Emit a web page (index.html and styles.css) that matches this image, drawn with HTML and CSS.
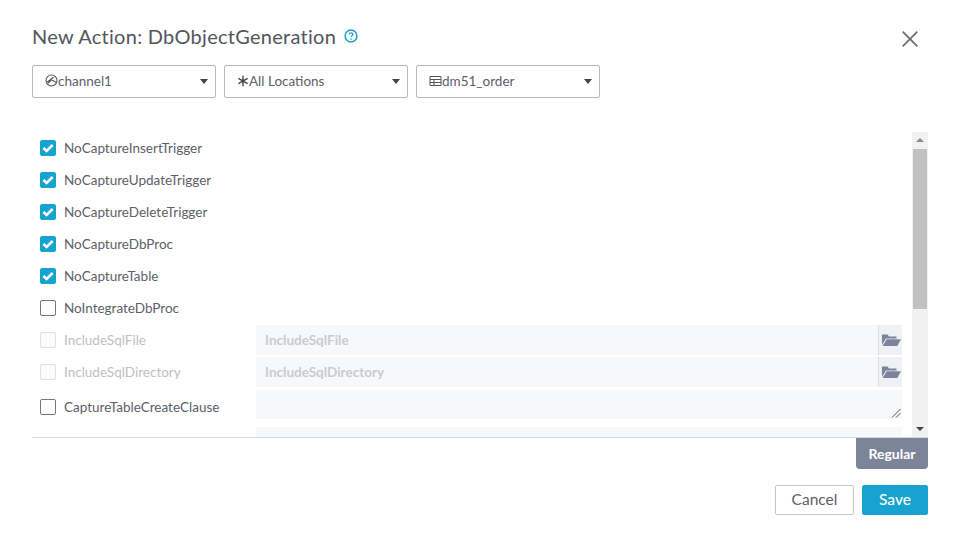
FILE: index.html
```html
<!DOCTYPE html>
<html lang="en">
<head>
<meta charset="utf-8">
<title>New Action</title>
<link rel="stylesheet" href="styles.css">
</head>
<body>
<main class="dialog">
  <header class="head">
    <h1 class="title">New Action: DbObjectGeneration</h1>
    <svg class="help" viewBox="0 0 14 14" width="14" height="14"><circle cx="7" cy="7" r="5.9" fill="none" stroke="#17a2d0" stroke-width="1.5"/><path d="M5.1 5.6c0-1.1.9-1.7 1.9-1.7s1.9.6 1.9 1.6c0 1.3-1.9 1.3-1.9 2.6" fill="none" stroke="#17a2d0" stroke-width="1.3"/><circle cx="7" cy="10.1" r=".8" fill="#17a2d0"/></svg>
    <svg class="close" viewBox="0 0 16 16" width="16" height="16"><path d="M.7.7l14.6 14.6M15.3.7L.7 15.3" stroke="#6b7078" stroke-width="1.8" fill="none"/></svg>
  </header>
  <div class="selects">
    <div class="select">
      <svg class="sicon" viewBox="0 0 13 13" width="13" height="13"><circle cx="6.5" cy="6.5" r="5.5" fill="none" stroke="#555" stroke-width="1.1"/><path d="M1.4 8.6L8.6 3.2M8.6 3.2v.1M3 9.4l3.4-3.6 5.4 3" fill="none" stroke="#555" stroke-width="1.1"/></svg>
      <span>channel1</span><i class="caret"></i>
    </div>
    <div class="select">
      <svg class="sicon ast" viewBox="0 0 12 12" width="12" height="12"><path d="M6 .8v10.4M1.4 3.4l9.2 5.2M10.6 3.4l-9.2 5.2" stroke="#444" stroke-width="1.4" fill="none"/></svg>
      <span>All Locations</span><i class="caret"></i>
    </div>
    <div class="select">
      <svg class="sicon tbl" viewBox="0 0 13 12" width="13" height="12"><path d="M1 1.5h11v9H1zM1 4.5h11M1 7.5h11M5 4.5v6" fill="none" stroke="#555" stroke-width="1"/></svg>
      <span>dm51_order</span><i class="caret"></i>
    </div>
  </div>
  <section class="panel">
    <div class="list">
      <div class="row"><span class="cb on"><svg viewBox="0 0 16 16" width="16" height="16"><path d="M3.4 8l3.2 3 6-6" fill="none" stroke="#fff" stroke-width="2.6"/></svg></span><span class="lbl">NoCaptureInsertTrigger</span></div>
      <div class="row"><span class="cb on"><svg viewBox="0 0 16 16" width="16" height="16"><path d="M3.4 8l3.2 3 6-6" fill="none" stroke="#fff" stroke-width="2.6"/></svg></span><span class="lbl">NoCaptureUpdateTrigger</span></div>
      <div class="row"><span class="cb on"><svg viewBox="0 0 16 16" width="16" height="16"><path d="M3.4 8l3.2 3 6-6" fill="none" stroke="#fff" stroke-width="2.6"/></svg></span><span class="lbl">NoCaptureDeleteTrigger</span></div>
      <div class="row"><span class="cb on"><svg viewBox="0 0 16 16" width="16" height="16"><path d="M3.4 8l3.2 3 6-6" fill="none" stroke="#fff" stroke-width="2.6"/></svg></span><span class="lbl">NoCaptureDbProc</span></div>
      <div class="row"><span class="cb on"><svg viewBox="0 0 16 16" width="16" height="16"><path d="M3.4 8l3.2 3 6-6" fill="none" stroke="#fff" stroke-width="2.6"/></svg></span><span class="lbl">NoCaptureTable</span></div>
      <div class="row"><span class="cb"></span><span class="lbl">NoIntegrateDbProc</span></div>
      <div class="row off"><span class="cb"></span><span class="lbl">IncludeSqlFile</span>
        <div class="field"><span class="ph">IncludeSqlFile</span><span class="browse"><svg viewBox="0 0 20 14" width="20" height="14"><path d="M1 12V1.5h5.5l1.5 2h7.5v2H5L1 12z" fill="#7b8499"/><path d="M5.7 6.2H20L16.3 13H1.6z" fill="#7b8499"/></svg></span></div></div>
      <div class="row off"><span class="cb"></span><span class="lbl">IncludeSqlDirectory</span>
        <div class="field"><span class="ph">IncludeSqlDirectory</span><span class="browse"><svg viewBox="0 0 20 14" width="20" height="14"><path d="M1 12V1.5h5.5l1.5 2h7.5v2H5L1 12z" fill="#7b8499"/><path d="M5.7 6.2H20L16.3 13H1.6z" fill="#7b8499"/></svg></span></div></div>
      <div class="row tall"><span class="cb"></span><span class="lbl">CaptureTableCreateClause</span>
        <div class="area"><svg class="grip" viewBox="0 0 10 10" width="10" height="10"><path d="M1 9.5L9.5 1M5 9.5L9.5 5" stroke="#555" stroke-width="1" fill="none"/></svg></div></div>
      <div class="row"><span class="cb hidden"></span><span class="lbl"></span><div class="field"></div></div>
    </div>
    <div class="scrollbar">
      <i class="arrow up"></i>
      <div class="thumb"></div>
      <i class="arrow down"></i>
    </div>
  </section>
  <div class="tabs"><span class="tab">Regular</span></div>
  <footer class="foot">
    <button class="btn cancel">Cancel</button>
    <button class="btn save">Save</button>
  </footer>
</main>
</body>
</html>
```
FILE: styles.css
```css
* { box-sizing: border-box; }
html, body { margin: 0; height: 100%; background: #fff; overflow: hidden; }
body { font-family: Lato, "Noto Sans", sans-serif; color: #4a4f57; }
.dialog { width: 960px; height: 539px; padding: 0 32px; display: flex; flex-direction: column; }
.head { height: 65px; display: flex; align-items: center; padding-top: 6px; position: relative; }
.title { margin: 0; font-size: 20px; font-weight: 400; color: #52565d; letter-spacing: .27px; }
.help { margin-left: 8px; margin-top: 1px; }
.close { margin-left: auto; margin-right: 10px; margin-top: 7px; }
.selects { display: flex; gap: 8px; height: 33px; }
.select { width: 184px; border: 1px solid #b5b8bd; border-radius: 2px; display: flex; align-items: center; padding: 0 0 2px 12px; font-size: 13.5px; color: #5c6068; position: relative; }
.sicon { flex: none; }
.caret { position: absolute; right: 7px; top: 13px; width: 0; height: 0; border: 4.5px solid transparent; border-top: 5px solid #444; border-bottom: 0; }
.panel { margin-top: 34px; height: 306px; display: flex; border-bottom: 1px solid #d5d7de; }
.list { flex: 1; overflow: hidden; padding-right: 10px; }
.row { height: 32px; display: flex; align-items: center; position: relative; }
.cb { flex: none; width: 16px; height: 16px; margin-left: 8px; border: 1px solid #6f7684; border-radius: 2px; background: #fff; display: block; }
.cb.on { background: #17a2d0; border-color: #17a2d0; }
.cb.on svg { display: block; margin: -1px; }
.cb.hidden { visibility: hidden; }
.lbl { width: 192px; flex: none; margin-left: 8px; font-size: 13.5px; color: #5c6068; line-height: 16px; padding-bottom: 1px; }
.off .cb { border-color: #dfe1e5; background: #fafbfc; }
.off .lbl { color: #bcc0c6; }
.field { flex: 1; height: 30px; background: #f7f8fa; display: flex; align-items: center; justify-content: space-between; }
.ph { padding-left: 9px; font-size: 13.5px; color: #c8cbd1; font-weight: 700; line-height: 16px; padding-bottom: 1px; }
.browse { width: 24px; height: 30px; background: #eff1f4; border-left: 1px solid #dcdfe4; display: flex; align-items: center; justify-content: center; }
.tall { height: 38px; }
.area { flex: 1; height: 29px; background: #f7f8fa; position: relative; margin-top: -6px; }
.grip { position: absolute; right: 1px; bottom: 1px; }
.scrollbar { flex: none; width: 16px; background: #f1f1f1; display: flex; flex-direction: column; align-items: center; height: 305px; position: relative; }
.thumb { width: 14px; height: 160px; background: #c1c1c1; margin-top: 17px; }
.arrow { position: absolute; left: 4px; width: 0; height: 0; border: 4px solid transparent; }
.arrow.up { top: 6px; border-bottom: 4px solid #888; border-top: 0; }
.arrow.down { bottom: 6px; border-top: 4px solid #444; border-bottom: 0; }
.tabs { display: flex; justify-content: flex-end; }
.tab { width: 72px; height: 31px; background: #7b8499; color: #fff; font-size: 14px; font-weight: 700; border-radius: 0 0 4px 4px; display: flex; align-items: center; justify-content: center; }
.foot { display: flex; justify-content: flex-end; gap: 8px; margin-top: 16px; }
.btn { height: 30px; font-family: inherit; font-size: 15.5px; border-radius: 2px; padding: 0 0 2px; }
.cancel { width: 79px; background: #fff; border: 1px solid #c4c6ca; color: #5c6068; }
.save { width: 66px; background: #17a2d0; border: 1px solid #17a2d0; color: #fff; font-weight: 500; }
```
